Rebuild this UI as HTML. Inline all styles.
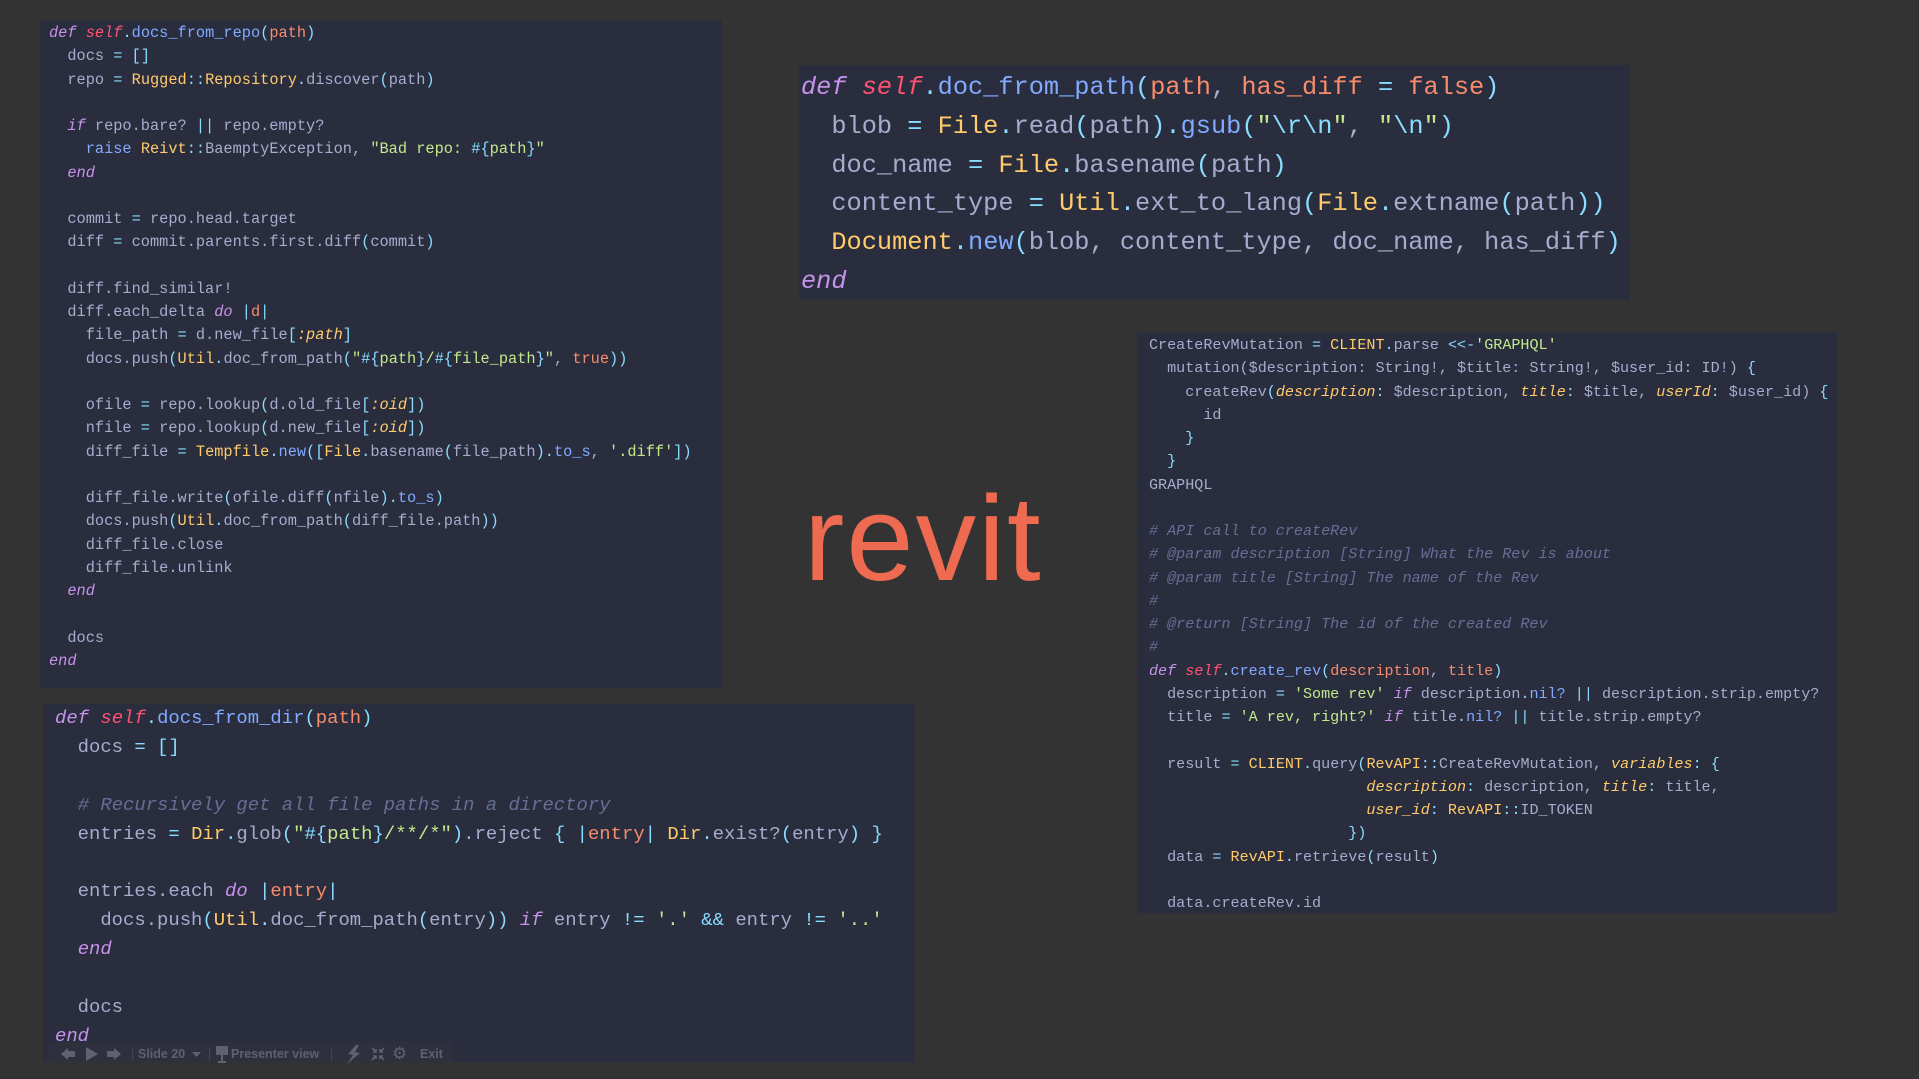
<!DOCTYPE html>
<html><head><meta charset="utf-8"><style>
html,body{margin:0;padding:0;width:1919px;height:1079px;overflow:hidden;background:#333333;}
.p{position:absolute;background:#292d3e;margin:0;font-family:"Liberation Mono","DejaVu Sans Mono",monospace;color:#a6accd;white-space:pre;box-sizing:border-box;}
.k{color:#c792ea;font-style:italic}
.s{color:#ff5370;font-style:italic}
.f{color:#82aaff}
.a{color:#f78c6c}
.c{color:#ffcb6b}
.g{color:#c3e88d}
.u{color:#89ddff}
.m{color:#676e95;font-style:italic}
.y{color:#ffcb6b;font-style:italic}
#p1{left:40px;top:20px;width:682px;height:668px;font-size:15.3px;line-height:23.25px;padding:2px 0 0 9px;}
#p2{left:799px;top:65px;width:831px;height:235px;font-size:25.3px;line-height:38.8px;padding:4px 0 0 2px;}
#p3{left:1137px;top:332px;width:700px;height:581px;font-size:15.1px;line-height:23.25px;padding:2px 0 0 12px;}
#p4{left:43px;top:704px;width:872px;height:358px;font-size:18.9px;line-height:28.9px;padding:0 0 0 12px;}
#revit{position:absolute;left:804px;top:468px;font-family:"Liberation Sans",sans-serif;font-size:121px;line-height:140px;color:#ee6a50;letter-spacing:2px;}
#bar{position:absolute;left:49px;top:1042px;width:404px;height:24px;background:rgba(50,52,62,0.6);font-family:"Liberation Sans",sans-serif;font-size:12.5px;font-weight:bold;color:#5d6170;line-height:24px;}
#bar span{position:absolute;top:0}
#bar svg{position:absolute}
</style></head><body>
<pre class="p" id="p1"><span class="k">def</span> <span class="s">self</span><span class="u">.</span><span class="f">docs_from_repo</span><span class="u">(</span><span class="a">path</span><span class="u">)</span>
  docs <span class="u">=</span> <span class="u">[]</span>
  repo <span class="u">=</span> <span class="c">Rugged</span><span class="u">::</span><span class="c">Repository</span><span class="u">.</span>discover<span class="u">(</span>path<span class="u">)</span>

  <span class="k">if</span> repo.bare? <span class="u">||</span> repo.empty?
    <span class="f">raise</span> <span class="c">Reivt</span><span class="u">::</span>BaemptyException, <span class="g">"Bad repo: </span><span class="u">#{</span><span class="g">path</span><span class="u">}</span><span class="g">"</span>
  <span class="k">end</span>

  commit <span class="u">=</span> repo.head.target
  diff <span class="u">=</span> commit.parents.first.diff<span class="u">(</span>commit<span class="u">)</span>

  diff.find_similar!
  diff.each_delta <span class="k">do</span> <span class="u">|</span><span class="a">d</span><span class="u">|</span>
    file_path <span class="u">=</span> d.new_file<span class="u">[</span><span class="y">:path</span><span class="u">]</span>
    docs.push<span class="u">(</span><span class="c">Util</span><span class="u">.</span>doc_from_path<span class="u">(</span><span class="g">"</span><span class="u">#{</span><span class="g">path</span><span class="u">}</span><span class="g">/</span><span class="u">#{</span><span class="g">file_path</span><span class="u">}</span><span class="g">"</span>, <span class="a">true</span><span class="u">))</span>

    ofile <span class="u">=</span> repo.lookup<span class="u">(</span>d.old_file<span class="u">[</span><span class="y">:oid</span><span class="u">])</span>
    nfile <span class="u">=</span> repo.lookup<span class="u">(</span>d.new_file<span class="u">[</span><span class="y">:oid</span><span class="u">])</span>
    diff_file <span class="u">=</span> <span class="c">Tempfile</span><span class="u">.</span><span class="f">new</span><span class="u">([</span><span class="c">File</span><span class="u">.</span>basename<span class="u">(</span>file_path<span class="u">).</span><span class="f">to_s</span>, <span class="g">'.diff'</span><span class="u">])</span>

    diff_file.write<span class="u">(</span>ofile.diff<span class="u">(</span>nfile<span class="u">).</span><span class="f">to_s</span><span class="u">)</span>
    docs.push<span class="u">(</span><span class="c">Util</span><span class="u">.</span>doc_from_path<span class="u">(</span>diff_file.path<span class="u">))</span>
    diff_file.close
    diff_file.unlink
  <span class="k">end</span>

  docs
<span class="k">end</span></pre>

<pre class="p" id="p2"><span class="k">def</span> <span class="s">self</span><span class="u">.</span><span class="f">doc_from_path</span><span class="u">(</span><span class="a">path</span>, <span class="a">has_diff</span> <span class="u">=</span> <span class="a">false</span><span class="u">)</span>
  blob <span class="u">=</span> <span class="c">File</span><span class="u">.</span>read<span class="u">(</span>path<span class="u">).</span><span class="f">gsub</span><span class="u">(</span><span class="g">"</span><span class="u">\r\n</span><span class="g">"</span>, <span class="g">"</span><span class="u">\n</span><span class="g">"</span><span class="u">)</span>
  doc_name <span class="u">=</span> <span class="c">File</span><span class="u">.</span>basename<span class="u">(</span>path<span class="u">)</span>
  content_type <span class="u">=</span> <span class="c">Util</span><span class="u">.</span>ext_to_lang<span class="u">(</span><span class="c">File</span><span class="u">.</span>extname<span class="u">(</span>path<span class="u">))</span>
  <span class="c">Document</span><span class="u">.</span><span class="f">new</span><span class="u">(</span>blob, content_type, doc_name, has_diff<span class="u">)</span>
<span class="k">end</span></pre>

<div id="revit">revit</div>

<pre class="p" id="p3">CreateRevMutation <span class="u">=</span> <span class="c">CLIENT</span><span class="u">.</span>parse <span class="u">&lt;&lt;-</span><span class="g">'GRAPHQL'</span>
  mutation($description: String!, $title: String!, $user_id: ID!) <span class="u">{</span>
    createRev<span class="u">(</span><span class="y">description</span><span class="u">:</span> $description, <span class="y">title</span><span class="u">:</span> $title, <span class="y">userId</span><span class="u">:</span> $user_id) <span class="u">{</span>
      id
    <span class="u">}</span>
  <span class="u">}</span>
GRAPHQL

<span class="m"># API call to createRev</span>
<span class="m"># @param description [String] What the Rev is about</span>
<span class="m"># @param title [String] The name of the Rev</span>
<span class="m">#</span>
<span class="m"># @return [String] The id of the created Rev</span>
<span class="m">#</span>
<span class="k">def</span> <span class="s">self</span><span class="u">.</span><span class="f">create_rev</span><span class="u">(</span><span class="a">description</span>, <span class="a">title</span><span class="u">)</span>
  description <span class="u">=</span> <span class="g">'Some rev'</span> <span class="k">if</span> description<span class="u">.</span><span class="f">nil?</span> <span class="u">||</span> description.strip.empty?
  title <span class="u">=</span> <span class="g">'A rev, right?'</span> <span class="k">if</span> title<span class="u">.</span><span class="f">nil?</span> <span class="u">||</span> title.strip.empty?

  result <span class="u">=</span> <span class="c">CLIENT</span><span class="u">.</span>query<span class="u">(</span><span class="c">RevAPI</span><span class="u">::</span>CreateRevMutation, <span class="y">variables</span><span class="u">:</span> <span class="u">{</span>
                        <span class="y">description</span><span class="u">:</span> description, <span class="y">title</span><span class="u">:</span> title,
                        <span class="y">user_id</span><span class="u">:</span> <span class="c">RevAPI</span><span class="u">::</span>ID_TOKEN
                      <span class="u">})</span>
  data <span class="u">=</span> <span class="c">RevAPI</span><span class="u">.</span>retrieve<span class="u">(</span>result<span class="u">)</span>

  data.createRev.id</pre>

<pre class="p" id="p4"><span class="k">def</span> <span class="s">self</span><span class="u">.</span><span class="f">docs_from_dir</span><span class="u">(</span><span class="a">path</span><span class="u">)</span>
  docs <span class="u">=</span> <span class="u">[]</span>

  <span class="m"># Recursively get all file paths in a directory</span>
  entries <span class="u">=</span> <span class="c">Dir</span><span class="u">.</span>glob<span class="u">(</span><span class="g">"</span><span class="u">#{</span><span class="g">path</span><span class="u">}</span><span class="g">/**/*"</span><span class="u">)</span>.reject <span class="u">{</span> <span class="u">|</span><span class="a">entry</span><span class="u">|</span> <span class="c">Dir</span><span class="u">.</span>exist?<span class="u">(</span>entry<span class="u">)</span> <span class="u">}</span>

  entries.each <span class="k">do</span> <span class="u">|</span><span class="a">entry</span><span class="u">|</span>
    docs.push<span class="u">(</span><span class="c">Util</span><span class="u">.</span>doc_from_path<span class="u">(</span>entry<span class="u">))</span> <span class="k">if</span> entry <span class="u">!=</span> <span class="g">'.'</span> <span class="u">&amp;&amp;</span> entry <span class="u">!=</span> <span class="g">'..'</span>
  <span class="k">end</span>

  docs
<span class="k">end</span></pre>

<div id="bar">
<svg style="left:12px;top:5px" width="14" height="14" viewBox="0 0 14 14"><path d="M0 7 L7 1 V4 H14 V10 H7 V13 Z" fill="#5d6170"/></svg>
<svg style="left:37px;top:5px" width="12" height="14" viewBox="0 0 12 14"><path d="M0 0 L12 7 L0 14 Z" fill="#5d6170"/></svg>
<svg style="left:58px;top:5px" width="14" height="14" viewBox="0 0 14 14"><path d="M14 7 L7 1 V4 H0 V10 H7 V13 Z" fill="#5d6170"/></svg>
<span style="left:82px;color:#474a56;font-weight:normal">|</span>
<span style="left:89px">Slide 20</span>
<svg style="left:143px;top:10px" width="9" height="5" viewBox="0 0 9 5"><path d="M0 0 H9 L4.5 5 Z" fill="#5d6170"/></svg>
<span style="left:159px;color:#474a56;font-weight:normal">|</span>
<svg style="left:167px;top:4px" width="12" height="17" viewBox="0 0 12 17"><path d="M0 0 H12 V9 H7 V15 H10 V17 H2 V15 H5 V9 H0 Z" fill="#5d6170"/></svg>
<span style="left:182px">Presenter view</span>
<span style="left:281px;color:#474a56;font-weight:normal">|</span>
<svg style="left:297px;top:3px" width="15" height="19" viewBox="0 0 15 19"><path d="M10 0 L2 9 L7 10 L1 19 L14 8 L9 7 L13 0 Z" fill="#5d6170"/></svg>
<svg style="left:322px;top:5px" width="14" height="14" viewBox="0 0 14 14"><path d="M1 1 L5 5 M5 2 V5 H2 M13 1 L9 5 M9 2 V5 H12 M1 13 L5 9 M2 9 H5 V12 M13 13 L9 9 M12 9 H9 V12" stroke="#5d6170" stroke-width="1.6" fill="none"/></svg>
<span style="left:343px;font-size:17px;font-weight:normal">&#9881;</span>
<span style="left:371px">Exit</span>
</div>
</body></html>
